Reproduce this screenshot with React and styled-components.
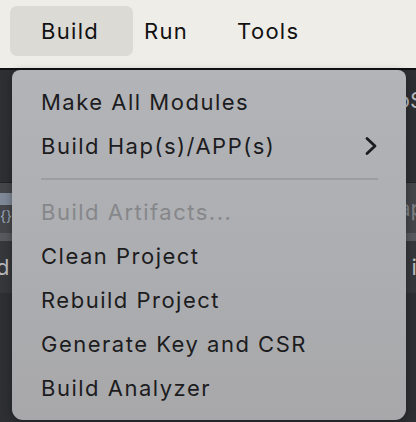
import styled, { createGlobalStyle } from "styled-components"

const GlobalStyle = createGlobalStyle`
    html, body {
        margin: 0;
        padding: 0;
        background: #2e2f32;
    }
    body {
        font-family: Inter, "Noto Sans", "Liberation Sans", sans-serif;
    }
`

const Screen = styled.div`
    position: relative;
    width: 416px;
    height: 422px;
    overflow: hidden;
    background: #2e2f32;
`
const MenuBar = styled.div`
    display: flex;
    align-items: center;
    height: 70px;
    padding: 0 10px;
    background: #efede8;
    border-bottom: 2px solid #111;
    box-sizing: border-box;
`
const BarItem = styled.div`
    height: 50px;
    display: flex;
    align-items: center;
    padding: 0 ${p => p.$right}px 0 ${p => p.$left}px;
    margin-top: -6px;
    border-radius: 7px;
    font-size: 22px;
    letter-spacing: 1.3px;
    color: #111;
    background: ${p => p.$active ? "#dcdad5" : "transparent"};
`
const Workspace = styled.div`
    display: flex;
    flex-direction: column;
    color: #c4c5c8;
    font-size: 22px;
`
const Band = styled.div`
    height: ${p => p.$h}px;
    display: flex;
    justify-content: space-between;
    align-items: center;
    background: ${p => p.$bg || "transparent"};
    border-bottom: ${p => p.$line ? "1px solid #232427" : "none"};
    box-sizing: border-box;
`
const EdgeText = styled.span`
    color: ${p => p.$dim ? "#7d7f84" : "#b9babd"};
    margin: ${p => p.$left ? "0 0 0 -4px" : "0 -8px 0 0"};
`
const Dropdown = styled.div`
    position: absolute;
    top: 70px;
    left: 12px;
    width: 394px;
    height: 350px;
    box-sizing: border-box;
    padding: 10px 0 0 29px;
    border-radius: 8px 8px 11px 11px;
    background: linear-gradient(180deg, #b3b4b8 0%, #acadb0 60%, #a8a8aa 100%);
    box-shadow: 0 2px 8px rgba(0, 0, 0, 0.35);
`
const Item = styled.div`
    height: 44px;
    display: flex;
    align-items: center;
    justify-content: space-between;
    padding-right: 28px;
    font-size: 22px;
    letter-spacing: 1.5px;
    color: ${p => p.$disabled ? "#86878a" : "#1c1c1e"};
`
const Separator = styled.div`
    height: 2px;
    margin: 10px 28px 10px 0;
    background: #9c9da0;
`
const Chevron = () => (
    <svg width="14" height="20" viewBox="0 0 14 20">
        <path d="M3 2.5 L11 10 L3 17.5" fill="none" stroke="#1c1c1e" strokeWidth="2.8" strokeLinecap="round" strokeLinejoin="round" />
    </svg>
)
const BraceIcon = styled.div`
    width: 22px;
    display: flex;
    flex-direction: column;
    gap: 2px;
    font-size: 14px;
    color: #9aa7b8;
    span.block{
        width: 16px;
        height: 12px;
        background: #7e8896;
    }
`

const App = () => {
    return (
        <Screen>
            <GlobalStyle />
            <MenuBar>
                <BarItem $active $left={31} $right={34}>Build</BarItem>
                <BarItem $left={11} $right={34}>Run</BarItem>
                <BarItem $left={15} $right={0}>Tools</BarItem>
            </MenuBar>
            <Workspace>
                <Band $h={60}>
                    <span />
                    <EdgeText>oS</EdgeText>
                </Band>
                <Band $h={53} $line />
                <Band $h={50} $bg="#44464a">
                    <BraceIcon><span className="block" />{"{}"}</BraceIcon>
                    <EdgeText $dim>ap</EdgeText>
                </Band>
                <Band $h={8} $bg="#57595e" />
                <Band $h={52} $bg="#36373b">
                    <EdgeText $left>d</EdgeText>
                    <EdgeText>it</EdgeText>
                </Band>
            </Workspace>
            <Dropdown>
                <Item>Make All Modules</Item>
                <Item>Build Hap(s)/APP(s)<Chevron /></Item>
                <Separator />
                <Item $disabled>Build Artifacts...</Item>
                <Item>Clean Project</Item>
                <Item>Rebuild Project</Item>
                <Item>Generate Key and CSR</Item>
                <Item>Build Analyzer</Item>
            </Dropdown>
        </Screen>
    )
}

export default App
